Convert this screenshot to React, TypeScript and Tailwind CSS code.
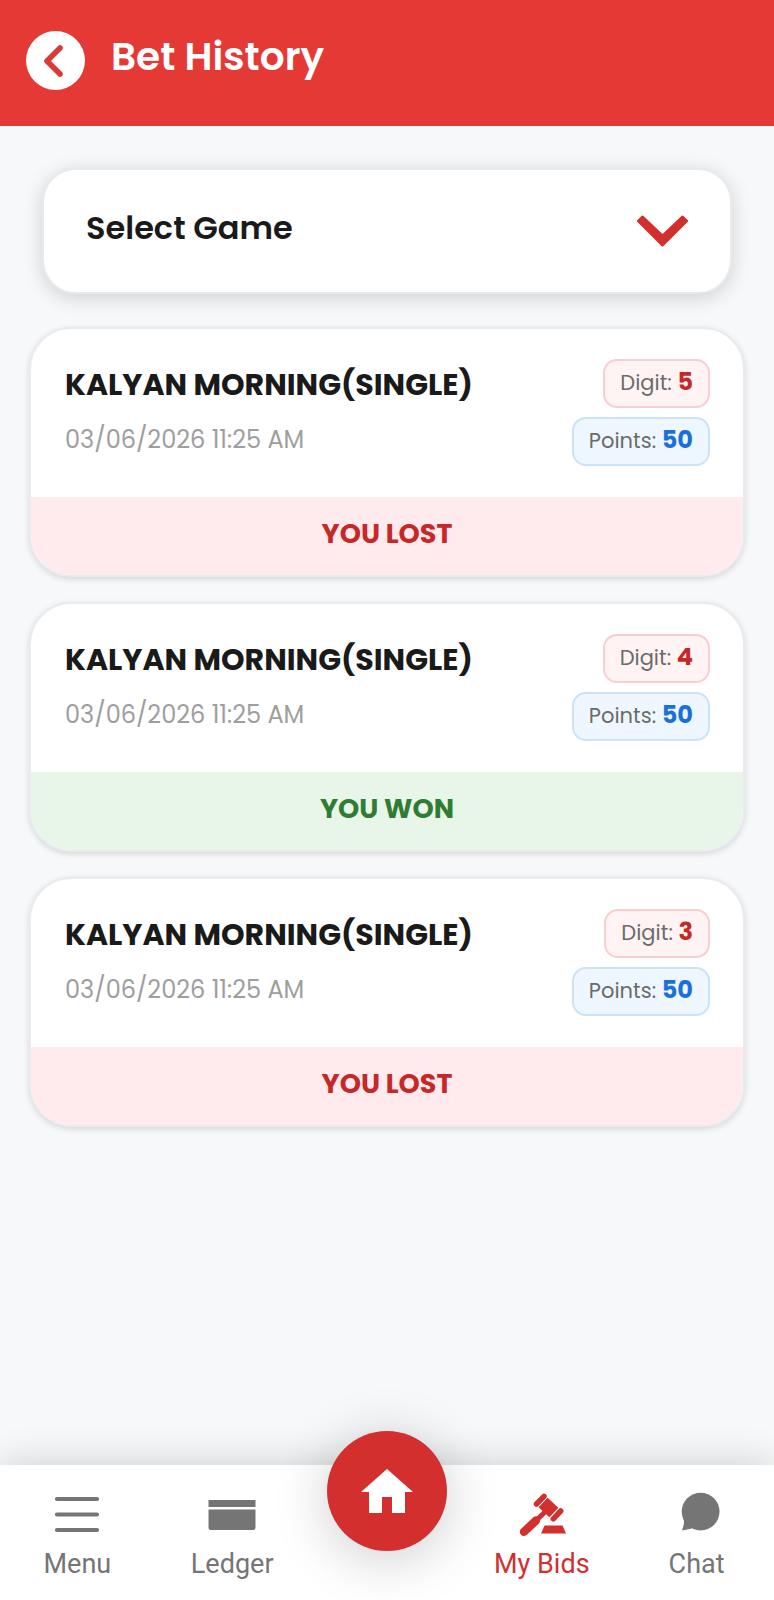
import { useState } from "react";

type Bet = { id: number; game: string; time: string; digit: string; points: number; won: boolean };

const bets: Bet[] = [
  { id: 1, game: "KALYAN MORNING(SINGLE)", time: "03/06/2026 11:25 AM", digit: "5", points: 50, won: false },
  { id: 2, game: "KALYAN MORNING(SINGLE)", time: "03/06/2026 11:25 AM", digit: "4", points: 50, won: true },
  { id: 3, game: "KALYAN MORNING(SINGLE)", time: "03/06/2026 11:25 AM", digit: "3", points: 50, won: false },
];

export default function BetHistoryPage() {
  const [game, setGame] = useState("");

  return (
    <div className="min-h-screen flex flex-col bg-[#f6f8fa] font-['Poppins','Inter',sans-serif] text-[#1a1a1a]">
      <header className="bg-[#e53935] text-white px-[26px] pt-[31px] pb-9 flex items-start gap-[26px]">
        <button type="button" aria-label="Back" className="shrink-0">
          <svg width="59" height="59" viewBox="0 0 59 59" className="block">
            <circle cx="29.5" cy="29.5" r="29.5" fill="#fff" />
            <path d="M34 17L21 30L34 43" fill="none" stroke="#d93a36" strokeWidth="5.6" strokeLinecap="round" strokeLinejoin="round" />
          </svg>
        </button>
        <h1 className="text-[39px] leading-[52px] font-semibold">Bet History</h1>
      </header>

      <main className="flex-1 px-[29px] pt-[42px] pb-10">
        <div className="relative mx-[13px]">
          <select
            aria-label="Select Game"
            value={game}
            onChange={(e) => setGame(e.target.value)}
            className="appearance-none w-full h-[126px] pl-[42px] pr-24 pb-1.5 rounded-[34px] bg-white border-2 border-[#e8eaec] text-[32px] font-semibold shadow-[0_4px_20px_rgba(0,0,0,0.16)]"
          >
            <option value="">Select Game</option>
            <option value="kalyan-morning">KALYAN MORNING</option>
          </select>
          <svg width="51" height="32" viewBox="0 0 51 32" className="absolute right-11 top-[47px] pointer-events-none">
            <path d="M5.500 2L25.500 21L45.500 2L49.500 6L25.500 30L1.500 6z" fill="#d32f2f" stroke="#d32f2f" strokeWidth="3" strokeLinejoin="round" />
          </svg>
        </div>

        <div className="mt-[33px] space-y-[25px]">
          {bets.map((b) => (
            <BetCard key={b.id} bet={b} />
          ))}
        </div>
      </main>

      <BottomNav />
    </div>
  );
}

function BetCard({ bet }: { bet: Bet }) {
  return (
    <article className="bg-white border-2 border-[#e9ebee] rounded-[42px] overflow-hidden shadow-[0_2px_6px_rgba(0,0,0,0.14)]">
      <div className="pl-[34px] pr-[33px] pt-[30px] pb-7 flex justify-between">
        <div>
          <h2 className="text-[30px] leading-[52px] font-bold">{bet.game}</h2>
          <p className="text-[24px] leading-[58px] text-[#9e9e9e]">{bet.time}</p>
        </div>
        <div className="flex flex-col items-end gap-[9px]">
          <div className="h-[49px] px-[15px] rounded-[14px] border-2 border-[#f9ced1] bg-[#fff3f3] text-[21px] leading-[42px] text-[#6b6b6b]">
            Digit: <b className="text-[24px] font-bold text-[#c62828]">{bet.digit}</b>
          </div>
          <div className="h-[49px] px-[15px] rounded-[14px] border-2 border-[#cbe3f8] bg-[#eef7ff] text-[21px] leading-[42px] text-[#6b6b6b]">
            Points: <b className="text-[24px] font-bold text-[#1a6fdb]">{bet.points}</b>
          </div>
        </div>
      </div>
      {bet.won ? (
        <p className="h-[78px] leading-[74px] text-center text-[27px] font-bold bg-[#e8f5e9] text-[#2e7d32]">YOU WON</p>
      ) : (
        <p className="h-[78px] leading-[74px] text-center text-[27px] font-bold bg-[#ffebee] text-[#c62828]">YOU LOST</p>
      )}
    </article>
  );
}

function BottomNav() {
  const item = "flex flex-col items-center pt-[27px] text-[27px] leading-8";

  return (
    <nav className="sticky bottom-0 h-[135px] bg-white grid grid-cols-5 font-['Roboto',sans-serif] text-[#757575] shadow-[0_-2px_36px_rgba(0,0,0,0.16)]">
      <a href="#menu" className={item}>
        <svg width="48" height="44" viewBox="0 0 48 44" className="mb-3" stroke="currentColor" strokeWidth="4.2" strokeLinecap="round">
          <path d="M4 7H44M4 22.500H44M4 38H44" />
        </svg>
        Menu
      </a>
      <a href="#ledger" className={item}>
        <svg width="48" height="44" viewBox="0 0 48 44" className="mb-3" fill="currentColor">
          <path d="M.5 8H47.500V15H.5zM.5 17.500H47.500V35.500Q47.500 38 45 38H3Q.5 38 .5 35.500z" />
        </svg>
        Ledger
      </a>
      <div className="flex justify-center">
        <a
          href="#home"
          aria-label="Home"
          className="-mt-[34px] size-[120px] rounded-full bg-[#d32f2f] flex items-center justify-center shadow-[0_8px_56px_rgba(0,0,0,0.2)]"
        >
          <svg width="52" height="44" viewBox="0 0 52 44" fill="#fff">
            <path d="M26 0L52 23H44V44H31V28H21V44H8V23H0z" />
          </svg>
        </a>
      </div>
      <a href="#bids" className={`${item} text-[#d32f2f]`}>
        <svg width="48" height="44" viewBox="0 0 48 44" className="mb-3" fill="currentColor" stroke="currentColor">
          <g fill="none" strokeWidth="5.5" strokeLinecap="round">
            <path d="M18.500 12L26 4.300M35.300 26.800L42.700 19" />
            <path d="M18 28.500L6 39.800" strokeWidth="8.400" />
            <path d="M27 20L17 29.500" strokeWidth="5" strokeLinecap="butt" />
          </g>
          <rect x="-7.4" y="-6.6" width="14.800" height="13.200" transform="translate(30.500 15.500) rotate(43)" stroke="none" />
          <path d="M26.500 33.500H44.500L48 41.500H23z" stroke="none" />
        </svg>
        My Bids
      </a>
      <a href="#chat" className={item}>
        <svg width="48" height="44" viewBox="0 0 48 44" className="mb-3" fill="currentColor">
          <circle cx="27.600" cy="19.600" r="18.900" />
          <path d="M10.500 27Q12 30 9 38.500Q14 37.500 19 36.500z" />
        </svg>
        Chat
      </a>
    </nav>
  );
}
